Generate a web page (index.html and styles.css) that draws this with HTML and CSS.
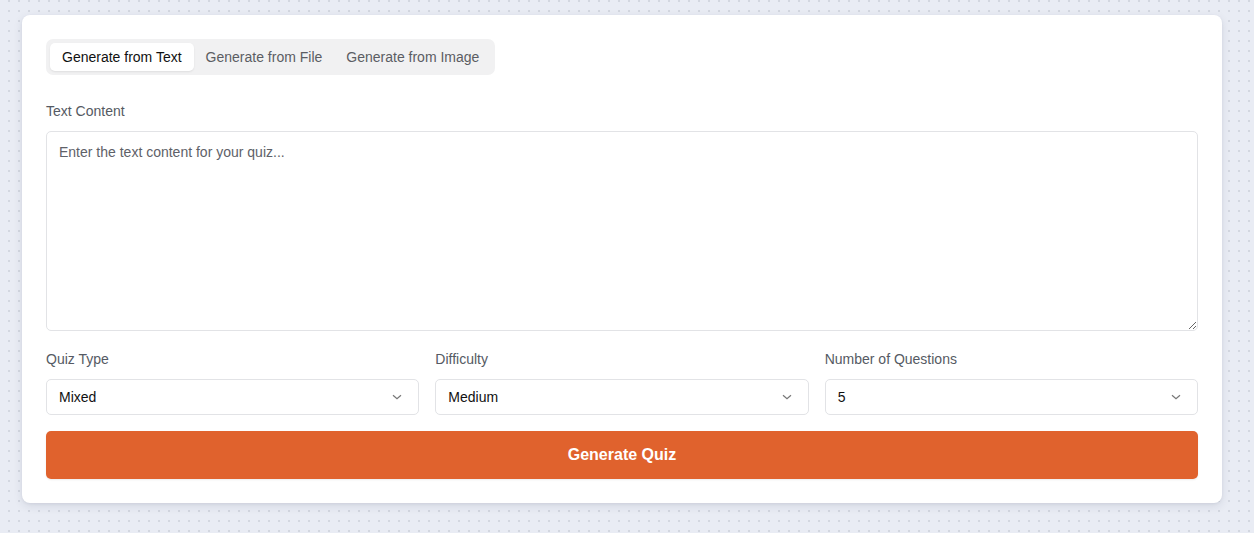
FILE: index.html
```html
<!DOCTYPE html>
<html>
<head>
<meta charset="utf-8">
<link rel="stylesheet" href="styles.css">
</head>
<body>
<div class="card">
  <div class="tabs">
    <div class="tab active">Generate from Text</div>
    <div class="tab">Generate from File</div>
    <div class="tab">Generate from Image</div>
  </div>
  <label class="label first">Text Content</label>
  <textarea class="textarea" placeholder="Enter the text content for your quiz..."></textarea>
  <div class="row">
    <div class="field">
      <label class="label">Quiz Type</label>
      <div class="select"><span>Mixed</span><svg class="chev" width="12" height="8" viewBox="0 0 12 8"><path d="M2 2.2 L6 5.8 L10 2.2" fill="none" stroke="#777" stroke-width="1.2"/></svg></div>
    </div>
    <div class="field">
      <label class="label">Difficulty</label>
      <div class="select"><span>Medium</span><svg class="chev" width="12" height="8" viewBox="0 0 12 8"><path d="M2 2.2 L6 5.8 L10 2.2" fill="none" stroke="#777" stroke-width="1.2"/></svg></div>
    </div>
    <div class="field">
      <label class="label">Number of Questions</label>
      <div class="select"><span>5</span><svg class="chev" width="12" height="8" viewBox="0 0 12 8"><path d="M2 2.2 L6 5.8 L10 2.2" fill="none" stroke="#777" stroke-width="1.2"/></svg></div>
    </div>
  </div>
  <button class="btn">Generate Quiz</button>
</div>
</body>
</html>
```

FILE: styles.css
```css
* { box-sizing: border-box; }
html, body { margin: 0; padding: 0; }
body {
  width: 1254px;
  height: 533px;
  overflow: hidden;
  font-family: "Liberation Sans", Arial, sans-serif;
  background-color: #e9ecf4;
  background-image: radial-gradient(circle, #d3d7e0 0.9px, transparent 1.1px);
  background-size: 10px 10px;
  background-position: 4px -4px;
  padding: 15px 32px 0 22px;
}
.card {
  background: #fff;
  border-radius: 8px;
  box-shadow: 0 3px 10px rgba(30, 40, 70, 0.10), 0 1px 3px rgba(30,40,70,0.06);
  padding: 24px 24px 24px 24px;
  width: 1200px;
  display: flex;
  flex-direction: column;
}
.tabs {
  display: flex;
  align-self: flex-start;
  background: #f1f1f2;
  border-radius: 7px;
  padding: 4px;
  height: 36px;
}
.tab {
  font-size: 14px;
  color: #5b5d63;
  padding: 0 12px;
  line-height: 28px;
  border-radius: 5px;
}
.tab.active {
  background: #fff;
  color: #111;
  box-shadow: 0 1px 2px rgba(0,0,0,0.08);
}
.label {
  display: block;
  font-size: 14px;
  color: #555a63;
  line-height: 16px;
  margin-bottom: 12px;
}
.label.first { margin-top: 28px; }
.textarea {
  display: block;
  width: 100%;
  height: 200px;
  border: 1px solid #e2e3e6;
  border-radius: 5px;
  padding: 12px 12px;
  font-family: "Liberation Sans", Arial, sans-serif;
  font-size: 14px;
  color: #111;
  resize: vertical;
  outline: none;
  margin: 0;
}
.textarea::placeholder { color: #5e6168; }
.row {
  display: grid;
  grid-template-columns: 1fr 1fr 1fr;
  gap: 16px;
  margin-top: 20px;
}
.select {
  height: 36px;
  border: 1px solid #e2e3e6;
  border-radius: 5px;
  display: flex;
  align-items: center;
  justify-content: space-between;
  padding: 0 15px 0 12px;
  font-size: 14px;
  color: #111;
}
.btn {
  margin-top: 16px;
  height: 48px;
  border: none;
  border-radius: 5px;
  background: #e0622d;
  color: #fff;
  font-family: "Liberation Sans", Arial, sans-serif;
  font-weight: bold;
  font-size: 16px;
  box-shadow: 0 1px 2px rgba(0,0,0,0.08);
}
```
